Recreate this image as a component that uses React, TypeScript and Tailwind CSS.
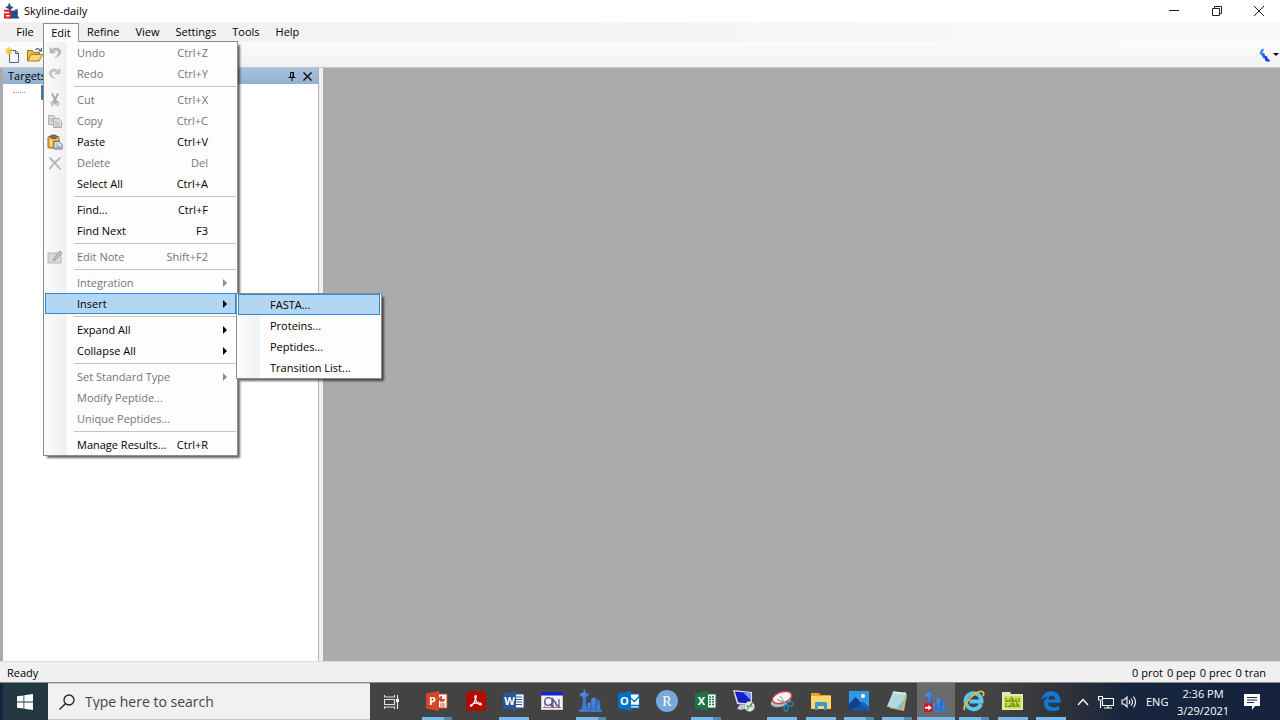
import type { ReactNode } from "react";

type Entry = {
  label: string;
  keys?: string;
  off?: boolean;
  arrow?: boolean;
  icon?: ReactNode;
  sub?: string[];
};

const UndoIcon = () => (
  <svg viewBox="0 0 16 16" className="size-4">
    <path d="M3 2.500v5.500h5.500L6.600 6.100C8.800 4.300 11.200 5.200 11.300 7.400c.1 2-1.300 3.700-3.300 5.200 3.600-1 5.900-3.200 5.800-5.800C13.600 3.200 8.600 1.400 5 4.500z" fill="#b9b9b9" stroke="#a6a6a6" strokeWidth=".5" />
  </svg>
);
const RedoIcon = () => (
  <svg viewBox="0 0 16 16" className="size-4">
    <path d="M13 2.500v5.500H7.500l1.900-1.900C7.200 4.300 4.800 5.200 4.700 7.400c-.1 2 1.300 3.700 3.300 5.200-3.600-1-5.900-3.200-5.800-5.800C2.400 3.200 7.400 1.400 11 4.500z" fill="#c4c4c4" stroke="#b0b0b0" strokeWidth=".5" />
  </svg>
);
const CutIcon = () => (
  <svg viewBox="0 0 16 16" className="size-4" fill="none" stroke="#a8a8a8">
    <path d="M5 1.500l4 8M11 1.500L7 9.500" strokeWidth="2" />
    <path d="M7 8h2l3 3-1 3-2.500-2h-1L5 14l-1-3z" fill="#b4b4b4" />
    <circle cx="5.500" cy="12" r="1" fill="#eee" stroke="none" />
    <circle cx="10.500" cy="12" r="1" fill="#eee" stroke="none" />
  </svg>
);
const CopyIcon = () => (
  <svg viewBox="0 0 16 16" className="size-4" fill="#dcdcdc" stroke="#acacac">
    <path d="M1.500 2.500h5l2 2v7h-7z" />
    <path d="M6.500 5.500h5l3 3v6h-8z" />
    <path d="M8 9h3M8 11h5M8 13h5M3 6h3M3 8h3" strokeWidth=".8" />
  </svg>
);
const PasteIcon = () => (
  <svg viewBox="0 0 16 16" className="size-4">
    <rect x="1" y="2.500" width="11" height="11.500" rx="1" fill="#e8b637" stroke="#94661a" />
    <path d="M3 4h2v8H3z" fill="#f8db7b" />
    <rect x="3.500" y="1" width="6" height="3.500" rx="1" fill="#77705f" stroke="#4f4a3e" strokeWidth=".6" />
    <path d="M7 7.500h5l3 3v4.500H7z" fill="#e9eff9" stroke="#4c5c7d" strokeWidth=".9" />
    <path d="M8.500 10h3M8.500 12h5M8.500 13.500h5" stroke="#7488b0" strokeWidth=".8" />
  </svg>
);
const DeleteIcon = () => (
  <svg viewBox="0 0 16 16" className="size-4" fill="none" stroke="#b4b4b4" strokeWidth="1.800" strokeLinecap="round">
    <path d="M3 3c3 3 7 7 10 11M13 3C9 6 5.500 9.500 3 13.500" />
  </svg>
);
const NoteIcon = () => (
  <svg viewBox="0 0 16 16" className="size-4">
    <rect x="1" y="4" width="13" height="10" fill="#dadada" stroke="#b7b7b7" />
    <path d="M6 12l1-3 6-7 2 1.800-6 6.700z" fill="#c2c2c2" stroke="#939393" strokeWidth=".8" />
  </svg>
);

const groups: Entry[][] = [
  [
    { label: "Undo", keys: "Ctrl+Z", off: true, icon: <UndoIcon /> },
    { label: "Redo", keys: "Ctrl+Y", off: true, icon: <RedoIcon /> },
  ],
  [
    { label: "Cut", keys: "Ctrl+X", off: true, icon: <CutIcon /> },
    { label: "Copy", keys: "Ctrl+C", off: true, icon: <CopyIcon /> },
    { label: "Paste", keys: "Ctrl+V", icon: <PasteIcon /> },
    { label: "Delete", keys: "Del", off: true, icon: <DeleteIcon /> },
    { label: "Select All", keys: "Ctrl+A" },
  ],
  [
    { label: "Find...", keys: "Ctrl+F" },
    { label: "Find Next", keys: "F3" },
  ],
  [{ label: "Edit Note", keys: "Shift+F2", off: true, icon: <NoteIcon /> }],
  [
    { label: "Integration", off: true, arrow: true },
    { label: "Insert", arrow: true, sub: ["FASTA...", "Proteins...", "Peptides...", "Transition List..."] },
  ],
  [
    { label: "Expand All", arrow: true },
    { label: "Collapse All", arrow: true },
  ],
  [
    { label: "Set Standard Type", off: true, arrow: true },
    { label: "Modify Peptide...", off: true },
    { label: "Unique Peptides...", off: true },
  ],
  [{ label: "Manage Results...", keys: "Ctrl+R" }],
];

const panel =
  "absolute z-10 border border-[#8c8c8c] bg-[linear-gradient(to_right,#fbfbfb_0,#f0f0f0_22px,#fdfdfd_23px)] px-px shadow-[3px_3px_2px_-1px_rgba(0,0,0,0.6)]";

function MenuItem({ entry }: { entry: Entry }) {
  return (
    <li role="none" className="relative">
      <button
        type="button"
        role="menuitem"
        disabled={entry.off}
        aria-haspopup={entry.arrow ? "menu" : undefined}
        className={`flex h-[21px] w-full items-center border pr-[7px] text-left ${
          entry.sub ? "border-[#2a8ad4] bg-[#b3d7f3]" : "border-transparent"
        } ${entry.off ? "text-[#757575]" : "text-black"}`}
      >
        <span className="flex w-[31px] shrink-0 pl-px">{entry.icon}</span>
        <span className="flex-1 whitespace-nowrap">{entry.label}</span>
        <span className={entry.arrow ? "" : "pr-5"}>{entry.keys}</span>
        {entry.arrow && (
          <svg viewBox="0 0 4 8" className="mr-px h-2 w-1">
            <path d="M0 0l4 4-4 4z" fill={entry.off ? "#8b8b8b" : "#000"} />
          </svg>
        )}
      </button>
      {entry.sub && (
        <ul role="menu" aria-label={entry.label} className={`${panel} top-0 left-full w-[146px]`}>
          {entry.sub.map((s, i) => (
            <li key={s} role="none">
              <button
                type="button"
                role="menuitem"
                className={`flex h-[21px] w-full items-center border pl-[31px] whitespace-nowrap ${
                  i === 0 ? "border-[#2a8ad4] bg-[#b3d7f3]" : "border-transparent"
                }`}
              >
                {s}
              </button>
            </li>
          ))}
        </ul>
      )}
    </li>
  );
}

function EditMenu() {
  return (
    <ul role="menu" aria-label="Edit" className={`${panel} top-[17px] -left-px w-[195px]`}>
      {groups.map((g, gi) => (
        <li key={gi} role="none">
          {gi > 0 && (
            <div role="separator" className="flex h-[5px] items-center pl-[29px]">
              <div className="h-px w-full bg-[#c3c3c3]" />
            </div>
          )}
          <ul role="none">
            {g.map((e) => (
              <MenuItem key={e.label} entry={e} />
            ))}
          </ul>
        </li>
      ))}
    </ul>
  );
}

const City = ({ arrow, red }: { arrow?: boolean; red?: boolean }) => (
  <svg viewBox="0 0 24 24" className="size-full">
    <defs>
      <linearGradient id="city" x1="0" y1="0" x2="1" y2="1">
        <stop offset="0" stopColor="#6b9bdc" />
        <stop offset=".6" stopColor="#3a76cf" />
        <stop offset="1" stopColor="#4f95ee" />
      </linearGradient>
    </defs>
    {red ? (
      <path d="M7 0h3v3l5 3.500-4 2.500v3h3v-1h4V9h4v12h2v3H8V9L2 6.500 7 3z" fill="#1d4f95" />
    ) : (
      <g fill="url(#city)" stroke="#2d5796" strokeWidth=".5">
        <path d="M5 0h1.500v3L11 5.500 8 8.500H7.500V14L9.500 24H2l2-10V8.500h-.5L0 5.500 5 3z" />
        <path d="M9 14h3.500v10H9zM12.500 11l2-2H18v15h-5.500zM18 12.500l1.500-1.500 2.500 1.500V24h-4z" />
        <path d="M0 21.500h24V24H0z" />
      </g>
    )}
    {red && <path d="M0 10h12v14H0z" fill="#d8222a" />}
    {red && <path d="M0 14.500h8M3 19.500h6" stroke="#fff" strokeWidth="2.500" />}
    {arrow && <path d="M0 15h9v9H0z" fill="#d6151b" />}
    {arrow && <path d="M1 18.500h3.500V16.500L8 19.500l-3.500 3v-2H1z" fill="#fff" />}
  </svg>
);

const Office = ({ color, letter, children }: { color: string; letter: string; children: ReactNode }) => (
  <svg viewBox="0 0 22 20" className="h-5 w-[22px]">
    <rect x="10" y="3" width="11" height="14" fill="#fff" stroke={color} />
    {children}
    <path d="M0 2.500L13 0v20L0 17.500z" fill={color} />
    <text x="6.500" y="14" textAnchor="middle" fontSize="11" fontWeight="700" fill="#fff" fontFamily="Open Sans, sans-serif">
      {letter}
    </text>
  </svg>
);

const apps: { name: string; open?: boolean; active?: boolean; stack?: boolean; icon: ReactNode }[] = [
  {
    name: "PowerPoint",
    open: true,
    stack: true,
    icon: (
      <Office color="#d24726" letter="P">
        <path d="M14 13h5M14 15h5" stroke="#d24726" />
        <circle cx="16" cy="8" r="3" fill="#d24726" />
        <path d="M16 8V4.500A3.500 3.500 0 0 1 19.500 8z" fill="#fff" />
      </Office>
    ),
  },
  {
    name: "Acrobat Reader",
    icon: (
      <svg viewBox="0 0 20 20" className="size-5">
        <rect width="20" height="20" rx="3.500" fill="#b30b00" />
        <path d="M9.800 4.500c-1.600 0-.8 3.500.7 6 1.200 2 3 3.700 4.400 3.400 1.400-.4.300-1.900-2.200-2-3-.2-5.700.7-7.300 1.700-1.500 1-.9 2.300.3 1.300 1.600-1.400 3.300-4.700 4.200-7.600.4-1.500.5-2.800-.1-2.800z" fill="none" stroke="#fff" strokeWidth="1.200" />
      </svg>
    ),
  },
  {
    name: "Word",
    open: true,
    icon: (
      <Office color="#2b579a" letter="W">
        <path d="M13 6h6M13 8.500h6M13 11h6M13 13.500h6" stroke="#2b579a" />
      </Office>
    ),
  },
  {
    name: "Qual Browser",
    icon: (
      <svg viewBox="0 0 22 18" className="h-[18px] w-[22px]">
        <rect x=".5" y=".5" width="21" height="17" fill="#f4f4f8" stroke="#c9c9d6" />
        <path d="M0 0h22v3.500H0z" fill="#1422c8" />
        <path d="M2 15.500h18M4 15V9M11 15V7M15 15V9" stroke="#c06a6a" />
        <circle cx="7.500" cy="9.500" r="3.800" fill="none" stroke="#4a4f80" strokeWidth="1.300" />
        <path d="M9 12l3 3V7l3 5 3 3V7" fill="none" stroke="#4a4f80" strokeWidth="1.200" />
      </svg>
    ),
  },
  { name: "Skyline", open: true, stack: true, icon: <span className="block size-[23px]"><City /></span> },
  {
    name: "Outlook",
    icon: (
      <Office color="#0072c6" letter="O">
        <path d="M11 5h10v10H11z" fill="#fff" />
        <path d="M12 6.500l4.500 4 5-5.500M12 14.500h9" fill="none" stroke="#0072c6" strokeWidth="1.400" />
      </Office>
    ),
  },
  {
    name: "R",
    icon: (
      <svg viewBox="0 0 22 22" className="size-[22px]">
        <circle cx="11" cy="11" r="11" fill="#75aadb" />
        <text x="11" y="15.500" textAnchor="middle" fontSize="14" fill="#fff" fontFamily="Liberation Serif, serif">R</text>
      </svg>
    ),
  },
  {
    name: "Excel",
    open: true,
    stack: true,
    icon: (
      <Office color="#217346" letter="X">
        <path d="M14 6h2m1 0h2M14 8.500h2m1 0h2M14 11h2m1 0h2M14 13.500h2m1 0h2" stroke="#217346" strokeWidth="1.500" />
      </Office>
    ),
  },
  {
    name: "Remote Desktop",
    icon: (
      <svg viewBox="0 0 22 22" className="size-[22px]">
        <path d="M0 0l19 2v13l-15-1z" fill="#dcdfe6" />
        <path d="M1.800 1.500L17.500 3v10.500L5.300 12.500z" fill="#1420c4" />
        <path d="M10 2.300L17.500 3v7z" fill="#7d95f5" />
        <path d="M7 14.500h5l2 4-7 1.500-3-1.500z" fill="#c5c9cf" />
        <circle cx="16.500" cy="16.500" r="5" fill="#e6ece3" stroke="#9a9f98" strokeWidth=".6" />
        <path d="M13.500 15.500l2.500 1.500L14 19.500M19.500 13L17 15.500l2.500 1.500" fill="none" stroke="#3a8a44" strokeWidth="1.200" />
      </svg>
    ),
  },
  {
    name: "Snipping Tool",
    open: true,
    icon: (
      <svg viewBox="0 0 24 22" className="h-[22px] w-6">
        <ellipse cx="11" cy="11" rx="10.500" ry="5.500" fill="#b9bdc1" transform="rotate(-18 11 11)" />
        <ellipse cx="12" cy="7.500" rx="10" ry="5.500" fill="#f4f4f4" stroke="#d0433f" strokeWidth="1.500" transform="rotate(-18 12 7.500)" />
        <path d="M7 9.500l10 4M10 6l5 7" stroke="#8d9297" />
        <ellipse cx="20" cy="14" rx="3" ry="2" fill="none" stroke="#2480b4" strokeWidth="1.600" />
        <ellipse cx="16" cy="18" rx="2" ry="3" fill="none" stroke="#2480b4" strokeWidth="1.600" />
      </svg>
    ),
  },
  {
    name: "File Explorer",
    open: true,
    icon: (
      <svg viewBox="0 0 20 18" className="h-[18px] w-5">
        <path d="M0 1h8l1.500 2H20v14H0z" fill="#e4a529" />
        <path d="M0 4h20v13H0z" fill="#fcd768" />
        <path d="M4 18v-7q0-1 1-1h10q1 0 1 1v7h-3v-4H7v4z" fill="#3b97dc" />
      </svg>
    ),
  },
  {
    name: "Photos",
    open: true,
    stack: true,
    icon: (
      <svg viewBox="0 0 20 20" className="size-5">
        <path d="M0 0h20v20H0z" fill="#2e9ae6" />
        <path d="M0 13l6.500-7L20 20H0z" fill="#12408a" />
        <path d="M9 15l5-4.500 6 5V20H0z" fill="#1c59ad" opacity=".85" />
        <circle cx="14" cy="5" r="2" fill="#fff" />
      </svg>
    ),
  },
  {
    name: "Notepad",
    open: true,
    stack: true,
    icon: (
      <svg viewBox="0 0 22 20" className="h-5 w-[22px]">
        <path d="M3 17l15 3 3-16-2-3z" fill="#ccb67c" />
        <path d="M7 1l13 1.500L15.500 18 1 15.500z" fill="#7fbcc6" />
        <path d="M7 1l13 1.500-2 6-7 8.500L1 15.500z" fill="#c2e6e8" opacity=".75" />
        <path d="M7 1l13 1.500" stroke="#edf3f4" strokeWidth="1.600" />
      </svg>
    ),
  },
  { name: "Skyline-daily", open: true, active: true, icon: <span className="block size-[23px]"><City arrow /></span> },
  {
    name: "Internet Explorer",
    open: true,
    stack: true,
    icon: (
      <svg viewBox="0 0 22 22" className="size-[22px]">
        <path d="M19.500 14A8 8 0 1 1 20 11.500H8" fill="none" stroke="#5cc8f2" strokeWidth="4" transform="translate(-1.500 0)" />
        <path d="M2 20C-3 17 14-2 20 2c1 1 .8 2.500 0 4" fill="none" stroke="#e9b838" strokeWidth="1.800" />
      </svg>
    ),
  },
  {
    name: "Method Setup",
    open: true,
    icon: (
      <svg viewBox="0 0 22 18" className="h-[18px] w-[22px]">
        <path d="M0 0h8l1 2h12v16H0z" fill="#e8e6c8" />
        <path d="M2 4h17.500v12.500H2z" fill="#d3e33c" />
        <path d="M4 9V6M4 9h3M8 9V6.500M10 9V6l2 3M14 9V6.500M17 9V6M4 14v-3M6 14h3v-3M11 14v-3l2 3M15 14v-3l2 3" fill="none" stroke="#5a8a30" strokeWidth="1.200" />
        <path d="M3 9.500h15M3 14.500h15" stroke="#5a8a30" strokeWidth=".7" />
      </svg>
    ),
  },
  {
    name: "Edge",
    open: true,
    icon: (
      <svg viewBox="0 0 20 20" className="size-5">
        <path d="M.5 9C1.500 3.500 5.200.3 10.200.3c5.600 0 9.300 4 9.300 9.500v2H6.800c.2 3 2.500 4.500 5.800 4.500 2.100 0 4-.6 5.600-1.500v3.700c-1.900 1-4.100 1.500-6.600 1.500C6.300 20 3 17 3 12.500c0-3.200 1.700-5.700 4.500-7C4.800 5.500 2.300 6.700.5 9zM6.900 8.500h7.400c0-2.300-1.300-3.700-3.500-3.700-2.100 0-3.600 1.400-3.900 3.700z" fill="#0f7ad8" />
      </svg>
    ),
  },
];

export default function App() {
  return (
    <div className="flex h-screen flex-col overflow-hidden bg-[#f0f0f0] font-['Open_Sans','Noto_Sans',sans-serif] text-[11px] leading-4 text-black">
      <header className="flex h-[22px] shrink-0 items-center bg-white pl-1">
        <span className="mr-[5px] block h-4 w-[15px]"><City red /></span>
        <h1 className="flex-1">Skyline-daily</h1>
        <div className="flex h-full items-center">
          <button type="button" aria-label="Minimize" className="flex w-[42px] justify-center">
            <svg viewBox="0 0 10 10" className="size-[10px]"><path d="M0 4.500h10" stroke="#222" /></svg>
          </button>
          <button type="button" aria-label="Restore" className="flex w-[43px] justify-center">
            <svg viewBox="0 0 10 10" className="size-[10px]" fill="none" stroke="#222"><path d="M.5 2.500h7v7h-7zM2.500 2.500v-2h7v7h-2" /></svg>
          </button>
          <button type="button" aria-label="Close" className="flex w-[42px] justify-center">
            <svg viewBox="0 0 10 10" className="size-[10px]" stroke="#222"><path d="M0 0l10 10M10 0L0 10" /></svg>
          </button>
        </div>
      </header>

      <nav aria-label="Main menu" className="flex h-5 shrink-0 items-center bg-linear-to-r from-[#f0f0f0] to-[#fafafa] pl-[7px]">
        <button type="button" className="w-9">File</button>
        <div className="relative h-[19px] w-9 self-end border border-b-0 border-[#8c8c8c] bg-[#fdfdfd]">
          <button type="button" aria-haspopup="menu" aria-expanded="true" className="relative z-20 h-[18px] w-full bg-[#fdfdfd]">
            Edit
          </button>
          <EditMenu />
        </div>
        {["Refine", "View", "Settings", "Tools", "Help"].map((m) => (
          <button key={m} type="button" className="px-2">{m}</button>
        ))}
      </nav>

      <div role="toolbar" aria-label="Tools" className="flex h-[26px] shrink-0 items-center border-b border-[#c8c8c8] bg-linear-to-b from-[#fcfcfc] to-[#f1f1f1] pl-[5px]">
        <button type="button" aria-label="New" className="mr-[6px]">
          <svg viewBox="0 0 16 16" className="size-4">
            <path d="M4.500 3.500h6l3 3v9h-9z" fill="#f2f6fc" stroke="#53627e" />
            <path d="M10.500 3.500v3h3" fill="none" stroke="#53627e" />
            <path d="M4 0v8M0 4h8M1.200 1.200l5.600 5.600M6.800 1.200L1.200 6.800" stroke="#edc51f" strokeWidth="1.200" />
          </svg>
        </button>
        <button type="button" aria-label="Open" className="flex-none">
          <svg viewBox="0 0 16 16" className="size-4">
            <path d="M.5 13.500v-10h5l1 2h6v8z" fill="#edbd49" stroke="#9b721c" />
            <path d="M.8 14L4 7.500h11.500L12 14z" fill="#fad975" stroke="#a57b24" />
            <path d="M8.500 3c2-2 4-1.500 5 .5M14.500 1v3h-3" fill="none" stroke="#53627e" strokeWidth="1.200" />
          </svg>
        </button>
        <span className="flex-1" />
        <button type="button" aria-label="Audit" className="flex items-center gap-[3px] pr-px">
          <svg viewBox="0 0 12 14" className="h-[14px] w-3" fill="none" strokeWidth="2.600" strokeLinecap="round">
            <path d="M4.500 2L3 5l1.500 1.500" stroke="#388ef0" />
            <path d="M5.500 6.500L6 9l2 .5" stroke="#1a63ea" />
            <path d="M8 9.500l.5 2.500 2 .5" stroke="#1638e2" />
          </svg>
          <svg viewBox="0 0 6 3" className="h-[3px] w-[6px]"><path d="M0 0h6L3 3z" /></svg>
        </button>
      </div>

      <main className="flex min-h-0 flex-1 bg-[#ababab]">
        <aside className="ml-[3px] flex w-[316px] flex-col border-r border-[#b0b0b0] bg-white">
          <div className="flex h-4 shrink-0 items-center bg-linear-to-b from-[#a8c2de] to-[#92b0d2] pr-[6px] pl-[5px]">
            <h2 className="flex-1">Targets</h2>
            <button type="button" aria-label="Pin" className="mr-[7px]">
              <svg viewBox="0 0 8 10" className="h-[10px] w-2" fill="none" stroke="#000"><path d="M2.500 6V1.500h3V6M5 1v5M.5 6.500h7M4 7v3" /></svg>
            </button>
            <button type="button" aria-label="Close panel">
              <svg viewBox="0 0 9 9" className="size-[9px]" stroke="#000" strokeWidth="1.300"><path d="M.5.500l8 8M8.500.500l-8 8" /></svg>
            </button>
          </div>
          <div className="flex h-4 items-center pl-[10px]">
            <span className="w-3 border-t border-dotted border-[#999]" />
            <span className="ml-4 h-[15px] w-3 border border-dotted border-[#b57a40] bg-[#0078d7]" />
          </div>
        </aside>
        <div className="w-1 bg-[#f0f0f0]" />
      </main>

      <footer className="flex h-[21px] shrink-0 items-center border-t border-[#dcdcdc] bg-[#f0f0f0] pt-0.5 pr-[14px] pl-[7px]">
        <span className="flex-1">Ready</span>
        <div className="flex gap-1">
          <span>0 prot</span>
          <span>0 pep</span>
          <span>0 prec</span>
          <span>0 tran</span>
        </div>
      </footer>

      <div className="flex h-[38px] shrink-0 items-stretch border-t border-[#8a8a8a] bg-[linear-gradient(to_right,#15233f_3px,#434343_3px,#434343_78%,#2f3239_83%,#17253e_88%,#14223d)] text-white">
        <button type="button" aria-label="Start" className="ml-[3px] flex w-[45px] items-center justify-center bg-[#213840]">
          <svg viewBox="0 0 16 16" className="mr-px size-4" fill="#fff">
            <path d="M0 2.300L6.500 1.400v6.200H0zM7.300 1.300L16 0v7.600H7.300zM0 8.400h6.500v6.200L0 13.700zM7.300 8.400H16V16l-8.700-1.300z" />
          </svg>
        </button>
        <label className="flex w-[322px] items-center border-y border-[#c9c9c9] bg-[#f1f1f1] pl-[11px]">
          <svg viewBox="0 0 16 16" className="size-4 shrink-0" fill="none" stroke="#222" strokeWidth="1.300">
            <circle cx="10" cy="6" r="5" />
            <path d="M6.300 9.700L.5 15.500" />
          </svg>
          <input aria-label="Search" placeholder="Type here to search" className="ml-[10px] w-full bg-transparent text-[14px] outline-none placeholder:text-[#444]" />
        </label>
        <button type="button" aria-label="Task View" className="mr-1 flex w-11 items-center justify-center">
          <svg viewBox="0 0 16 16" className="size-4" fill="none" stroke="#e2e2e2" strokeWidth="1.200">
            <path d="M.5 1v2h10V1M.5 5.500h10v5H.5zM.5 15v-2h10v2M13.500 1v14" />
            <path d="M12 5h3v3h-3z" fill="#fff" stroke="none" />
          </svg>
        </button>
        <div className="flex w-[652px]">
          {apps.map((a) => (
            <button key={a.name} type="button" aria-label={a.name} className={`flex flex-1 flex-col items-center ${a.active ? "bg-[#6b6b6b]" : ""}`}>
              <span className="flex min-h-0 flex-1 items-center pt-px">{a.icon}</span>
              <span className={`flex h-[3px] ${a.active ? "w-full" : "w-[30px]"}`}>
                {a.open && <span className="h-full flex-1 bg-[#76b9ed]" />}
                {a.open && a.stack && <span className="h-full w-2 bg-[#5788ae]" />}
              </span>
            </button>
          ))}
        </div>
        <div className="flex flex-1 items-center pl-[7px]">
          <button type="button" aria-label="Show hidden icons" className="mr-[9px]">
            <svg viewBox="0 0 12 8" className="h-2 w-3" fill="none" stroke="#fff" strokeWidth="1.300"><path d="M1 7l5-5.500L11 7" /></svg>
          </button>
          <button type="button" aria-label="Network" className="mr-[7px]">
            <svg viewBox="0 0 16 14" className="h-[14px] w-4" fill="none" stroke="#fff" strokeWidth="1.100">
              <path d="M5 3.500h10.500v7h-11V6M6 13h8M10 10.500V13M2.500 5.500V13" />
              <path d="M.5 1.500h4v3.500h-4z" />
            </svg>
          </button>
          <button type="button" aria-label="Volume" className="mr-[9px]">
            <svg viewBox="0 0 16 14" className="h-[14px] w-4" fill="none" stroke="#fff" strokeWidth="1.100">
              <path d="M1 5h2l3-3v10L3 9H1zM8 5q1.500 2 0 4M10 3.500q3 3.500 0 7M12.500 1.500q4 5.500 0 11" />
            </svg>
          </button>
          <button type="button" className="w-[22px] whitespace-nowrap">ENG</button>
          <button type="button" className="ml-[5px] w-[60px] text-center leading-[17px] whitespace-nowrap">
            <span className="block">2:36 PM</span>
            <span className="block">3/29/2021</span>
          </button>
          <button type="button" aria-label="Notifications" className="ml-[11px]">
            <svg viewBox="0 0 16 16" className="size-4">
              <path d="M0 0h16v12h-5l-3 4v-4H0z" fill="#fff" />
              <path d="M3 3.500h10M3 6h10M3 8.500h7" stroke="#17253e" />
            </svg>
          </button>
        </div>
      </div>
    </div>
  );
}
